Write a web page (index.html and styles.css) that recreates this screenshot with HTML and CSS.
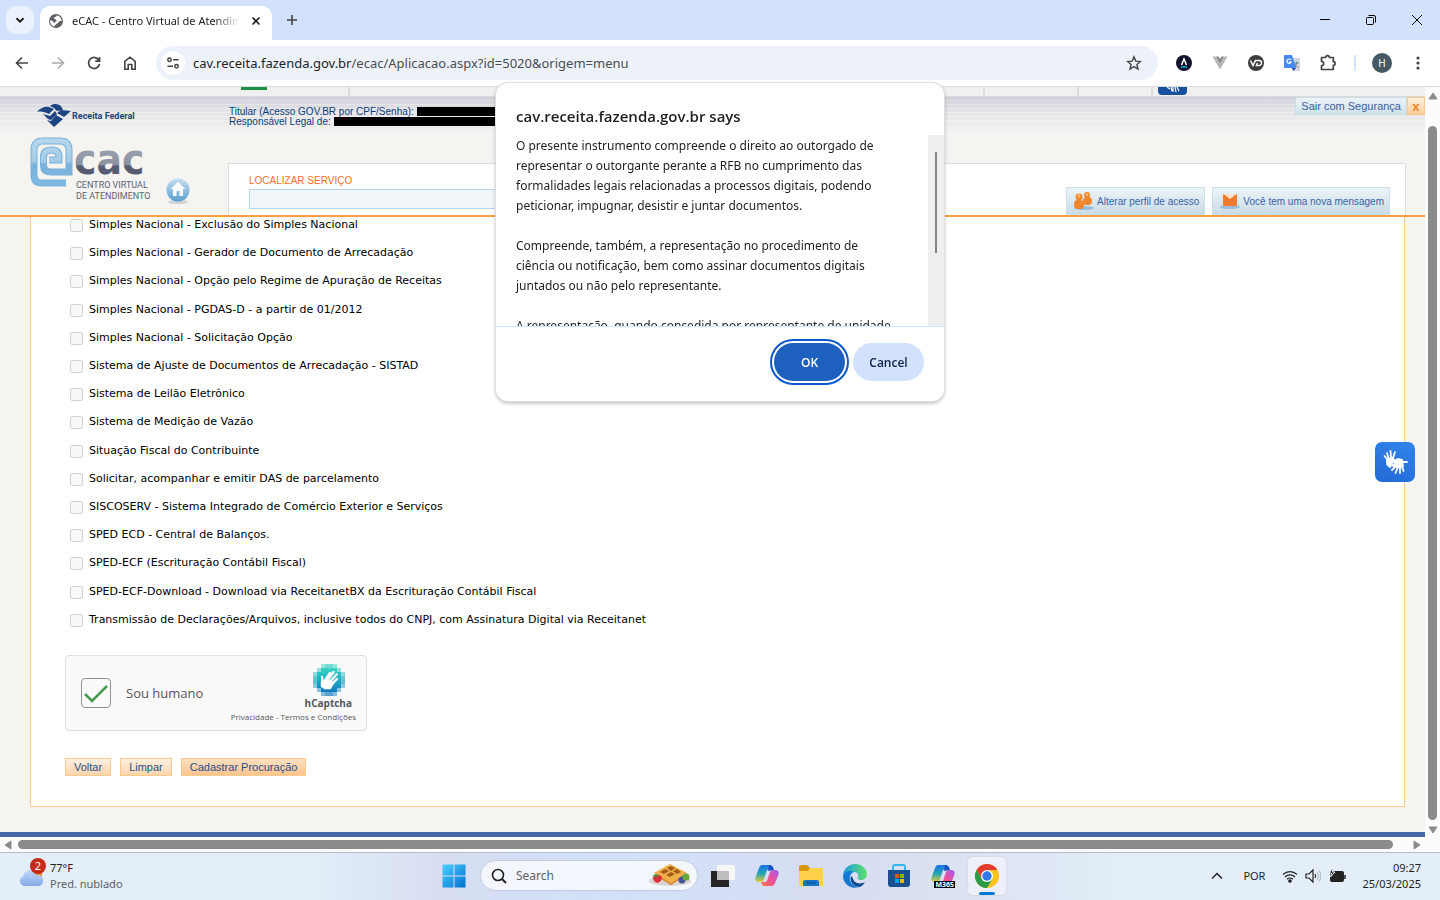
FILE: index.html
```html
<!DOCTYPE html>
<html lang="pt-BR">
<head>
    <meta charset="UTF-8">
    <meta name="viewport" content="width=device-width, initial-scale=1.0">
    <title>eCAC - Centro Virtual de Atendimento</title>
    <link rel="stylesheet" href="styles.css">
</head>
<body>

    <!-- Tab strip -->
    <div class="tabstrip">
        <button class="tab-search" aria-label="Search tabs">
            <svg width="12" height="12" viewBox="0 0 12 12"><path d="M2.5 4.2L6 7.7l3.5-3.5" fill="none" stroke="#1f1f1f" stroke-width="2"/></svg>
        </button>
        <div class="tab">
            <svg width="16" height="16" viewBox="0 0 16 16"><circle cx="8" cy="8" r="7" fill="#5f6368"/><path d="M9 2.5c-1 1.600-3.200 1.200-3 3 .1 1 2.600.6 2.600 2 0 1.200-1.600 1-1.600 2 0 .7-1.600.3-1.900-.7C4.500 7.500 2.800 7.600 2.300 7c-.6 3.300 1.300 5.700 4 6.600L7 12c1-.2 1.200-1.400 2.300-1.600 1.400-.3 1-2 2.200-2.100.9-.1 1.300-.5 2.100-.1.300-2.500-1.500-5-4.600-5.700z" fill="#fff"/></svg>
            <span class="tab-title">eCAC - Centro Virtual de Atendimento</span>
            <button class="tab-close" aria-label="Close tab">
                <svg width="10" height="10" viewBox="0 0 10 10"><path d="M1.500 1.500l7 7M8.500 1.500l-7 7" stroke="#1f1f1f" stroke-width="1.600"/></svg>
            </button>
        </div>
        <button class="new-tab" aria-label="New tab">
            <svg width="12" height="12" viewBox="0 0 12 12"><path d="M6 1v10M1 6h10" stroke="#444" stroke-width="1.600"/></svg>
        </button>
        <div class="window-buttons">
            <button aria-label="Minimize"><svg width="12" height="12" viewBox="0 0 12 12"><path d="M1 5.500h10" stroke="#000"/></svg></button>
            <button aria-label="Restore"><svg width="12" height="12" viewBox="0 0 12 12"><rect x="1.500" y="3.500" width="7" height="7" rx="1" fill="none" stroke="#000"/><path d="M3.500 1.500h5.500a1.500 1.500 0 0 1 1.500 1.500v5.500" fill="none" stroke="#000"/></svg></button>
            <button aria-label="Close"><svg width="12" height="12" viewBox="0 0 12 12"><path d="M1 1l10 10M11 1L1 11" stroke="#000"/></svg></button>
        </div>
    </div>

    <!-- Toolbar -->
    <div class="toolbar">
        <button aria-label="Back"><svg width="16" height="16" viewBox="0 0 16 16"><path d="M14 8H3M8 2.500L2.500 8 8 13.500" fill="none" stroke="#444" stroke-width="1.600"/></svg></button>
        <button aria-label="Forward"><svg width="16" height="16" viewBox="0 0 16 16"><path d="M2 8h11M8 2.500L13.500 8 8 13.500" fill="none" stroke="#aaa" stroke-width="1.600"/></svg></button>
        <button aria-label="Reload"><svg width="16" height="16" viewBox="0 0 16 16"><path d="M13 5.500A5.500 5.500 0 1 0 13.500 9M13.500 2v4.200H9.300" fill="none" stroke="#444" stroke-width="1.700"/></svg></button>
        <button aria-label="Home"><svg width="16" height="16" viewBox="0 0 16 16"><path d="M2.800 14.200V6.300L8 2.200l5.200 4.100v7.900H9.800V9.500H6.200v4.700z" fill="none" stroke="#444" stroke-width="1.600"/></svg></button>
        <div class="address">
            <button class="site-info" aria-label="View site information">
                <svg width="14" height="14" viewBox="0 0 14 14" fill="none" stroke="#444" stroke-width="1.500"><circle cx="3.500" cy="3.800" r="1.700"/><path d="M7 3.800h5.500M1.500 10.200H7"/><circle cx="10.500" cy="10.200" r="1.700"/></svg>
            </button>
            <div class="url">cav.receita.fazenda.gov.br<span>/ecac/Aplicacao.aspx?id=5020&amp;origem=menu</span></div>
            <button aria-label="Bookmark"><svg width="16" height="16" viewBox="0 0 16 16"><path d="M8 1.800l1.800 4.300 4.600.4-3.500 3 1.100 4.500L8 11.600 4 14l1.100-4.500-3.500-3 4.600-.4z" fill="none" stroke="#444" stroke-width="1.400"/></svg></button>
        </div>
        <div class="extensions">
            <button aria-label="Accessibility extension"><svg width="16" height="16" viewBox="0 0 16 16"><circle cx="8" cy="8" r="8" fill="#11152b"/><path d="M5.500 10L8 4l2.500 6" fill="none" stroke="#fff" stroke-width="1.500"/><path d="M5 12h6" stroke="#1aa0d8" stroke-width="1.600"/></svg></button>
            <button aria-label="Vue devtools"><svg width="16" height="16" viewBox="0 0 16 16"><path d="M.5 1.500h3.300L8 9l4.200-7.500h3.300L8 14.500z" fill="#b5b5b5"/><path d="M4 1.500h2.500L8 4l1.500-2.500H12L8 8.800z" fill="#868686"/></svg></button>
            <button aria-label="Video downloader"><svg width="16" height="16" viewBox="0 0 16 16"><circle cx="8" cy="8" r="8" fill="#3d3d3d"/><path d="M2.500 5.500L5 10.500l2.500-5H11a2.500 2.500 0 0 1 0 5H8.500L9.500 8" fill="none" stroke="#fff" stroke-width="1.500"/></svg></button>
            <button aria-label="Translate"><svg width="16" height="16" viewBox="0 0 16 16"><path d="M6 3h9a1 1 0 0 1 1 1v11a1 1 0 0 1-1 1H9z" fill="#d4d6da"/><path d="M10 8h5M12.500 6.500V8c0 2-1.500 4-2.500 4.500M11 9c.5 1.500 2 3 3.500 3.500" fill="none" stroke="#6f8790"/><path d="M1 0h7l4 13H1a1 1 0 0 1-1-1V1a1 1 0 0 1 1-1z" fill="#4687f1"/><path d="M12 13H7.500l2 3z" fill="#2a50c8"/><path d="M7 5A2.200 2.200 0 1 0 7.200 7H5" fill="none" stroke="#fff" stroke-width="1.200"/></svg></button>
            <button aria-label="Extensions"><svg width="18" height="18" viewBox="0 0 18 18"><path d="M2.500 3.500h4.200a1.800 1.800 0 0 1 3.600 0h4v4.200a1.800 1.800 0 0 1 0 3.600v4.200H2.500v-3.800a2.200 2.200 0 0 0 0-4.400z" fill="none" stroke="#444" stroke-width="1.700" stroke-linejoin="round"/></svg></button>
        </div>
        <div class="divider"></div>
        <button class="avatar">H</button>
        <button aria-label="Menu"><svg width="16" height="16" viewBox="0 0 16 16" fill="#444"><circle cx="8" cy="3" r="1.600"/><circle cx="8" cy="8" r="1.600"/><circle cx="8" cy="13" r="1.600"/></svg></button>
    </div>

    <!-- Page viewport with its scrollbars -->
    <div class="viewport">
        <div class="page">
            <div class="gov-bar">
                <div class="gov-brand"><i></i></div>
                <div class="gov-space"></div>
                <div class="gov-link wide"></div>
                <div class="gov-link"></div>
                <div class="gov-vlibras"><svg width="16" height="8" viewBox="0 0 16 8"><path d="M2 0l3 2M6 0l1 4M8 0v5M10 0l1 5M12 0l2 4" stroke="#fff" stroke-width="1.200"/></svg></div>
            </div>

            <header class="header">
                <div class="brand">
                    <div class="receita">
                        <svg width="34" height="23" viewBox="0 0 34 23" fill="#1b4480"><path d="M0 8C3 4 8 2 12 3l5 2-5 5C8 8 4 7 0 8z"/><path d="M13 2c4-3 8-2 11 0l2 4-6 1-3-3z"/><path d="M24 6l10 1-7 6-7-4z"/><path d="M6 10l7 2 5-5 2 3-6 6-3-1z"/><path d="M19 11l7 4-9 8-7-7 4 1z"/></svg>
                        <strong>Receita Federal</strong>
                    </div>
                    <svg class="ecac" width="120" height="68" viewBox="0 0 120 68">
                        <defs>
                            <linearGradient id="blue" x1="0" y1="0" x2="0" y2="1"><stop offset="0" stop-color="#b5d6ec"/><stop offset=".5" stop-color="#a2cbe7"/><stop offset=".55" stop-color="#79b1da"/><stop offset="1" stop-color="#7eb8df"/></linearGradient>
                            <linearGradient id="gray" x1="0" y1="0" x2="0" y2="1"><stop offset=".3" stop-color="#9a9fae"/><stop offset=".6" stop-color="#8d92a2"/><stop offset=".64" stop-color="#555d72"/></linearGradient>
                        </defs>
                        <path d="M36 46H12Q4 46 4 38V13Q4 4 13 4H30Q39 4 39 13V35H21Q13.500 35 13.500 28V20Q13.500 13 21.500 13Q29 13 29 20V23H19" fill="none" stroke="#79b1da" stroke-width="7"/>
                        <path d="M36 46H12Q4 46 4 38V13Q4 4 13 4H30Q39 4 39 13V35H21Q13.500 35 13.500 28V20Q13.500 13 21.500 13Q29 13 29 20V23H19" fill="none" stroke="url(#blue)" stroke-width="5"/>
                        <text x="44" y="37" class="cac">cac</text>
                        <text x="46" y="51" class="cac-sub">CENTRO VIRTUAL</text>
                        <text x="46" y="62" class="cac-sub">DE ATENDIMENTO</text>
                    </svg>
                    <a class="home" href="#" aria-label="Início">
                        <svg width="26" height="28" viewBox="0 0 26 28"><defs><linearGradient id="orb" x1="0" y1="0" x2="0" y2="1"><stop offset="0" stop-color="#c4dff0"/><stop offset="1" stop-color="#5d9fce"/></linearGradient></defs><ellipse cx="13" cy="25" rx="10" ry="2" fill="#d0d4d6"/><circle cx="13" cy="13" r="11.500" fill="url(#orb)"/><path d="M13 5l7.500 7H18v7h-3.500v-5h-3v5H8v-7H5.500z" fill="#fff"/></svg>
                    </a>
                </div>
                <div class="header-main">
                    <div class="header-top">
                        <div class="holder">
                            <div>Titular (Acesso GOV.BR por CPF/Senha): <b></b></div>
                            <div>Responsável Legal de: <b></b></div>
                        </div>
                        <div class="logout">
                            <a href="#">Sair com Segurança</a>
                            <button aria-label="Sair">x</button>
                        </div>
                    </div>
                    <div class="service-box">
                        <div class="search-service">
                            <label for="servico">LOCALIZAR SERVIÇO</label>
                            <input type="text" id="servico">
                        </div>
                        <a class="header-btn" href="#">
                            <svg width="22" height="20" viewBox="0 0 22 20"><ellipse cx="11" cy="17" rx="10" ry="2" fill="#9cbdda"/><g fill="#f08529"><circle cx="14" cy="4" r="3"/><rect x="10" y="6" width="9" height="8" rx="4"/><circle cx="6" cy="6" r="3.500"/><rect x="1" y="9" width="10" height="9" rx="4"/></g><circle cx="6" cy="5" r="1.800" fill="#fbb878"/><circle cx="14" cy="3.500" r="1.500" fill="#fbb878"/></svg>
                            <span>Alterar perfil de acesso</span>
                        </a>
                        <a class="header-btn" href="#">
                            <svg width="22" height="20" viewBox="0 0 22 20"><ellipse cx="11" cy="16" rx="10" ry="2" fill="#9cbdda"/><rect x="4" y="3" width="14" height="12" rx="1" fill="#f07b2c"/><path d="M4.500 3h13L11 8z" fill="#fde2cd"/></svg>
                            <span>Você tem uma nova mensagem</span>
                        </a>
                    </div>
                </div>
            </header>

            <main class="content">
                <form class="panel">
                    <ul class="services">
                        <li><label><input type="checkbox" disabled>Simples Nacional - Exclusão do Simples Nacional</label></li>
                        <li><label><input type="checkbox" disabled>Simples Nacional - Gerador de Documento de Arrecadação</label></li>
                        <li><label><input type="checkbox" disabled>Simples Nacional - Opção pelo Regime de Apuração de Receitas</label></li>
                        <li><label><input type="checkbox" disabled>Simples Nacional - PGDAS-D - a partir de 01/2012</label></li>
                        <li><label><input type="checkbox" disabled>Simples Nacional - Solicitação Opção</label></li>
                        <li><label><input type="checkbox" disabled>Sistema de Ajuste de Documentos de Arrecadação - SISTAD</label></li>
                        <li><label><input type="checkbox" disabled>Sistema de Leilão Eletrônico</label></li>
                        <li><label><input type="checkbox" disabled>Sistema de Medição de Vazão</label></li>
                        <li><label><input type="checkbox" disabled>Situação Fiscal do Contribuinte</label></li>
                        <li><label><input type="checkbox" disabled>Solicitar, acompanhar e emitir DAS de parcelamento</label></li>
                        <li><label><input type="checkbox" disabled>SISCOSERV - Sistema Integrado de Comércio Exterior e Serviços</label></li>
                        <li><label><input type="checkbox" disabled>SPED ECD - Central de Balanços.</label></li>
                        <li><label><input type="checkbox" disabled>SPED-ECF (Escrituração Contábil Fiscal)</label></li>
                        <li><label><input type="checkbox" disabled>SPED-ECF-Download - Download via ReceitanetBX da Escrituração Contábil Fiscal</label></li>
                        <li><label><input type="checkbox" disabled>Transmissão de Declarações/Arquivos, inclusive todos do CNPJ, com Assinatura Digital via Receitanet</label></li>
                    </ul>

                    <div class="captcha">
                        <label class="captcha-check">
                            <span class="captcha-box">
                                <input type="checkbox" checked>
                                <svg width="26" height="22" viewBox="0 0 26 22"><path d="M2 12l7 7L24 4" fill="none" stroke="#4a9c54" stroke-width="2.600"/></svg>
                            </span>
                            Sou humano
                        </label>
                        <div class="captcha-brand">
                            <svg width="32" height="32" viewBox="0 0 32 32" shape-rendering="crispEdges">
                                <defs><linearGradient id="teal" x1="0" y1="0" x2="0" y2="1"><stop offset="0" stop-color="#3bd4c1"/><stop offset=".45" stop-color="#1fb2c5"/><stop offset="1" stop-color="#1479bf"/></linearGradient></defs>
                                <path d="M8 0h16v4h4v4h4v16h-4v4h-4v4H8v-4H4v-4H0V8h4V4h4z" fill="url(#teal)" opacity=".5"/>
                                <path d="M12 0h8v4h4v4h4v4h4v8h-4v4h-4v4h-4v4h-8v-4H8v-4H4v-4H0v-8h4V8h4V4h4z" fill="url(#teal)" opacity=".4"/>
                                <path d="M8 4h16v4h4v16h-4v4H8v-4H4V8h4z" fill="url(#teal)"/>
                                <g shape-rendering="auto" stroke="#fff" stroke-width="2.400" stroke-linecap="round"><path d="M11 18l6-9M14 17l6.500-9M17 18l6.500-7.500M19 20l5-5M9.500 19l-.5-6"/><path d="M9 18l5-3 6 4-3 5h-5l-3-2z" fill="#fff"/></g>
                            </svg>
                            <strong>hCaptcha</strong>
                            <div class="captcha-links"><a href="#">Privacidade</a> - <a href="#">Termos e Condições</a></div>
                        </div>
                    </div>

                    <div class="actions">
                        <button type="button">Voltar</button>
                        <button type="reset">Limpar</button>
                        <button type="submit" class="primary">Cadastrar Procuração</button>
                    </div>
                </form>
            </main>
            <footer class="footer"></footer>

            <button class="vlibras" aria-label="Acessível em Libras">
                <svg width="26" height="26" viewBox="0 0 26 26" stroke="#fff" stroke-width="1.800" stroke-linecap="round"><path d="M5 10L2.500 7M6.500 9L5 4M9 8.500L8.500 2M11 9l2-6M5 15l3 3"/><path d="M5 10l6-1.500 1 2.500-4 2 3 3-3 .5-3-3z" fill="#fff"/><path d="M13 18l-3 3M15.500 19l-2 5M18 19v5M20 17l1.500 5M21 13h4"/><path d="M10 13l6-3 4 1 1 6-3 2-5-1.500-3-1 4-2z" fill="#fff"/></svg>
            </button>
        </div>

        <div class="scroll-y">
            <svg width="10" height="8" viewBox="0 0 10 8"><path d="M5 1l4 6H1z" fill="#8b8b8b" stroke="#8b8b8b" stroke-linejoin="round"/></svg>
            <div class="track"><div class="thumb"></div></div>
            <svg width="10" height="8" viewBox="0 0 10 8"><path d="M5 7L1 1h8z" fill="#8b8b8b" stroke="#8b8b8b" stroke-linejoin="round"/></svg>
        </div>
        <div class="scroll-x">
            <svg width="8" height="10" viewBox="0 0 8 10"><path d="M1 5l6-4v8z" fill="#8b8b8b" stroke="#8b8b8b" stroke-linejoin="round"/></svg>
            <div class="track"><div class="thumb"></div></div>
            <svg width="8" height="10" viewBox="0 0 8 10"><path d="M7 5L1 1v8z" fill="#8b8b8b" stroke="#8b8b8b" stroke-linejoin="round"/></svg>
        </div>
    </div>

    <!-- Confirm dialog -->
    <div class="dialog" role="dialog" aria-labelledby="dialog-title">
        <h1 id="dialog-title">cav.receita.fazenda.gov.br says</h1>
        <div class="dialog-body">
            <div class="dialog-text">
                <p>O presente instrumento compreende o direito ao outorgado de<br>representar o outorgante perante a RFB no cumprimento das<br>formalidades legais relacionadas a processos digitais, podendo<br>peticionar, impugnar, desistir e juntar documentos.</p>
                <p>Compreende, também, a representação no procedimento de<br>ciência ou notificação, bem como assinar documentos digitais<br>juntados ou não pelo representante.</p>
                <p>A representação, quando concedida por representante de unidade</p>
            </div>
            <div class="dialog-scroll"><div></div></div>
        </div>
        <div class="dialog-actions">
            <button class="ok">OK</button>
            <button>Cancel</button>
        </div>
    </div>

    <!-- Taskbar -->
    <div class="taskbar">
        <button class="weather">
            <span class="weather-icon">
                <svg width="26" height="18" viewBox="0 0 26 18"><defs><linearGradient id="cloud" x1="0" y1="0" x2="0" y2="1"><stop offset="0" stop-color="#c2d9fb"/><stop offset="1" stop-color="#86aae8"/></linearGradient></defs><circle cx="19" cy="5" r="4" fill="#f08a1c"/><path d="M5 17a5 5 0 0 1-1-9.500C5 3 8 1 11 1s5 2 6 5c4-1 7 1.500 7 5.500s-2 5.500-5 5.500z" fill="url(#cloud)"/></svg>
                <span class="badge">2</span>
            </span>
            <span class="weather-text">77°F<small>Pred. nublado</small></span>
        </button>

        <div class="apps">
            <button class="start" aria-label="Start">
                <svg width="24" height="24" viewBox="0 0 24 24"><defs><linearGradient id="win" x1="0" y1="0" x2="1" y2="1"><stop offset="0" stop-color="#4fd0ff"/><stop offset="1" stop-color="#0070d0"/></linearGradient></defs><path d="M.5.5h11v11H.5zM12.500.5h11v11h-11zM.5 12.500h11v11H.5zM12.500 12.500h11v11h-11z" fill="url(#win)"/></svg>
            </button>
            <div class="search">
                <svg width="16" height="16" viewBox="0 0 16 16"><circle cx="7" cy="7" r="5.500" fill="none" stroke="#222" stroke-width="1.600"/><path d="M11 11l4 4" stroke="#222" stroke-width="2"/></svg>
                <input type="text" placeholder="Search" aria-label="Search">
                <svg width="42" height="24" viewBox="0 0 42 24"><ellipse cx="21" cy="17" rx="21" ry="5" fill="#d9d3d3"/><path d="M5 11L21 1l17 10-16 10z" fill="#d98a2b"/><path d="M5 9L21 0l17 9-16 10z" fill="#f0b04c"/><path d="M11 8l5-3 4 2-5 3zM18 4l4-2 4 2-4 3zM17 11l5-3 4 2-5 3zM24 7l4-2 4 3-4 2z" fill="#a35d18"/><path d="M4 13q5-5 9 0 0 5-5 6-4-2-4-6z" fill="#dc2f3d"/><path d="M3 12l4-2 3 2-3 1z" fill="#4d9b34"/><circle cx="33" cy="16" r="3.500" fill="#47549c"/><circle cx="37" cy="13" r="3.500" fill="#67a83b"/></svg>
            </div>
            <button aria-label="Task view"><svg width="24" height="24" viewBox="0 0 24 24"><path d="M0 7h18v16H0z" fill="#242424"/><path d="M6 1h18v15H6z" fill="#f6f6f6"/><path d="M6 7h12v9H6z" fill="#bdbdbd"/></svg></button>
            <button aria-label="Copilot">
                <svg width="24" height="24" viewBox="0 0 24 24"><defs><linearGradient id="copa" x1="0" y1="0" x2="0" y2="1"><stop offset="0" stop-color="#1b72e6"/><stop offset=".5" stop-color="#1ea6b8"/><stop offset="1" stop-color="#e8c82d"/></linearGradient><linearGradient id="copb" x1="1" y1="0" x2="0" y2="1"><stop offset="0" stop-color="#9d5cf0"/><stop offset=".5" stop-color="#ef4f9c"/><stop offset="1" stop-color="#f77a3c"/></linearGradient></defs><path d="M7 1h8q2 0 3 4h-4q-2 0-3 4l-2 6q-1 3-4 3H3q-4-1-2-6l3-8q1-3 3-3z" fill="url(#copa)"/><path d="M14 1q4 0 5 5l-6 1z" fill="#1850c4"/><path d="M17 22H9q-2 0-3-4h4q2 0 3-4l2-6q1-2 4-2h2q4 1 2 6l-3 7q-1 3-3 3z" fill="url(#copb)"/></svg>
            </button>
            <button aria-label="File Explorer"><svg width="24" height="24" viewBox="0 0 24 24"><path d="M0 3q0-2 2-2h6l3 3-2 4H0z" fill="#d9970c"/><path d="M0 7h9l2-3h13v18H0z" fill="#ffd14a"/><path d="M4 22v-4q0-2 2-2h12q2 0 2 2v4z" fill="#1577c7"/><path d="M7 19h10" stroke="#074d91"/></svg></button>
            <button aria-label="Edge">
                <svg width="24" height="24" viewBox="0 0 24 24"><defs><linearGradient id="edge" x1="0" y1="0" x2="1" y2="0"><stop offset="0" stop-color="#1a9be0"/><stop offset="1" stop-color="#5fe06a"/></linearGradient></defs><path d="M0 11C1 4 6 0 12 0c7 0 12 5 12 10 0 4-3 6-6 6-2 0-4-1-3-3 1-3-1-5-4-5-4 0-8 1-11 3z" fill="url(#edge)"/><path d="M0 12c2-5 7-6 11-4-3 1-5 4-4 8 1 4 5 7 9 7C8 26 0 20 0 12z" fill="#1479cf"/><path d="M8 12c-2 6 3 11 9 11 2-1 4-3 5-5-5 3-12 1-12-4z" fill="#0c4a8f"/></svg>
            </button>
            <button aria-label="Microsoft Store"><svg width="24" height="24" viewBox="0 0 24 24"><path d="M6 6V3q0-2 2-2h8q2 0 2 2v3" fill="none" stroke="#35b6ee" stroke-width="2"/><path d="M1 6h22v14q0 3-3 3H4q-3 0-3-3z" fill="#19508d"/><path d="M8 10h4v4H8z" fill="#f25022"/><path d="M13 10h4v4h-4z" fill="#7fba00"/><path d="M8 15h4v4H8z" fill="#00a4ef"/><path d="M13 15h4v4h-4z" fill="#ffb900"/></svg></button>
            <button aria-label="Microsoft 365">
                <span class="m365">
                    <svg width="24" height="24" viewBox="0 0 24 24"><path d="M7 1h8q2 0 3 4h-4q-2 0-3 4l-2 6q-1 3-4 3H3q-4-1-2-6l3-8q1-3 3-3z" fill="url(#copa)"/><path d="M14 1q4 0 5 5l-6 1z" fill="#1850c4"/><path d="M17 22H9q-2 0-3-4h4q2 0 3-4l2-6q1-2 4-2h2q4 1 2 6l-3 7q-1 3-3 3z" fill="url(#copb)"/></svg>
                    <b>M365</b>
                </span>
            </button>
            <button class="active" aria-label="Chrome"><svg width="24" height="24" viewBox="0 0 24 24"><circle cx="12" cy="12" r="12" fill="#fcc31e"/><path d="M1.600 6A12 12 0 0 1 22.400 6H12L6.800 15z" fill="#e33b2e"/><path d="M1.600 6A12 12 0 0 0 12 24l5.200-9-10.400 0z" fill="#2a9a48"/><circle cx="12" cy="12" r="6" fill="#fff"/><circle cx="12" cy="12" r="4.700" fill="#3377e8"/></svg></button>
        </div>

        <div class="tray">
            <button aria-label="Show hidden icons"><svg width="12" height="12" viewBox="0 0 12 12"><path d="M1 8.500l5-5 5 5" fill="none" stroke="#222" stroke-width="1.500"/></svg></button>
            <button class="lang">POR</button>
            <button class="status" aria-label="Network, volume and battery">
                <svg width="16" height="16" viewBox="0 0 16 16" fill="none" stroke="#222" stroke-width="1.200"><path d="M1 6.500a10 10 0 0 1 14 0M3 9a7 7 0 0 1 10 0M5 11.300a4.300 4.300 0 0 1 6 0"/><circle cx="8" cy="13" r="1.200" fill="#222"/></svg>
                <svg width="16" height="16" viewBox="0 0 16 16" fill="none" stroke="#222" stroke-width="1.200"><path d="M1 6h3l4-4v12l-4-4H1z"/><path d="M10 6q1.500 2 0 4"/><path d="M12 4q3 4 0 8M14 2.500q4 5.500 0 11" stroke="#b5bcc5"/></svg>
                <svg width="18" height="16" viewBox="0 0 18 16"><rect x="2" y="3" width="14" height="11" rx="2" fill="#222"/><path d="M17 7v4" stroke="#222" stroke-width="1.500"/><path d="M5 0L1 5h2.500L2.500 9 7 4H4.500z" fill="#222" stroke="#e4eef8"/></svg>
            </button>
            <button class="clock"><span>09:27</span><span>25/03/2025</span></button>
        </div>
    </div>

</body>
</html>
```
FILE: styles.css
```css
* {
    box-sizing: border-box;
}
body {
    margin: 0;
    height: 100vh;
    display: flex;
    flex-direction: column;
    overflow: hidden;
    font-family: "Noto Sans", "Open Sans", sans-serif;
    font-size: 12px;
    color: #1f1f1f;
}
svg {
    display: block;
    flex: none;
}
button {
    font-family: inherit;
    color: inherit;
    border: 0;
    padding: 0;
    background: none;
    display: flex;
    align-items: center;
    justify-content: center;
    cursor: pointer;
}
a {
    color: inherit;
    text-decoration: none;
}

/* Tab strip */
.tabstrip {
    height: 40px;
    flex: none;
    display: flex;
    align-items: center;
    padding: 0 0 0 6px;
    background: #d3e2fc;
}
.tab-search {
    width: 28px;
    height: 28px;
    border-radius: 10px;
    background: #ebf2fe;
}
.tab {
    align-self: flex-end;
    width: 232px;
    height: 34px;
    margin-left: 6px;
    padding: 0 8px 5px;
    display: flex;
    align-items: center;
    gap: 8px;
    background: #fff;
    border-radius: 10px 10px 0 0;
}
.tab-title {
    flex: 1;
    overflow: hidden;
    white-space: nowrap;
    font-size: 11px;
    -webkit-mask-image: linear-gradient(90deg, #000 85%, transparent);
    mask-image: linear-gradient(90deg, #000 85%, transparent);
}
.tab-close {
    width: 16px;
    height: 16px;
}
.new-tab {
    width: 28px;
    height: 28px;
    margin-left: 6px;
}
.window-buttons {
    margin-left: auto;
    display: flex;
}
.window-buttons button {
    width: 46px;
    height: 40px;
}

/* Toolbar */
.toolbar {
    height: 47px;
    flex: none;
    display: flex;
    align-items: center;
    gap: 8px;
    padding: 0 8px;
    background: #fff;
    border-bottom: 1px solid #dcdcdc;
}
.toolbar button {
    width: 28px;
    height: 28px;
    flex: none;
}
.address {
    flex: 1;
    height: 34px;
    margin-left: 4px;
    padding: 0 10px 0 5px;
    display: flex;
    align-items: center;
    gap: 8px;
    border-radius: 17px;
    background: #edf2fa;
}
.toolbar .site-info {
    width: 24px;
    height: 24px;
    border-radius: 12px;
    background: #fff;
}
.url {
    flex: 1;
    font-size: 13px;
    white-space: nowrap;
}
.url span {
    color: #4a4d51;
}
.extensions {
    display: flex;
    gap: 8px;
    margin-left: 4px;
}
.divider {
    width: 2px;
    height: 16px;
    margin: 0 4px;
    background: #d3e2fc;
}
.toolbar .avatar {
    width: 20px;
    height: 20px;
    margin: 0 4px;
    border-radius: 10px;
    background: #455a64;
    color: #fff;
    font-size: 10px;
}

/* Viewport and scrollbars */
.viewport {
    flex: 1;
    min-height: 0;
    display: grid;
    grid-template-columns: 1fr 15px;
    grid-template-rows: 1fr 15px;
    background: #fcfcfc;
}
.page {
    min-width: 0;
    min-height: 0;
    display: flex;
    flex-direction: column;
    background: #f5f4f0;
    overflow: hidden;
}
.scroll-y,
.scroll-x {
    display: flex;
    align-items: center;
    gap: 6px;
}
.scroll-y {
    flex-direction: column;
    padding: 5px 0 3px;
}
.scroll-x {
    padding: 0 4px;
}
.track {
    flex: 1;
    display: flex;
}
.thumb {
    flex: 1;
    border-radius: 5px;
    background: #8b8b8b;
}
.scroll-y .thumb {
    width: 9px;
    margin-top: 20px;
}
.scroll-x .thumb {
    height: 9px;
    margin-right: 14px;
}

/* Government bar */
.gov-bar {
    height: 10px;
    flex: none;
    display: flex;
    padding-right: 238px;
    background: #f0f0f0;
    border-bottom: 1px solid #dadada;
}
.gov-brand {
    width: 350px;
    padding-left: 241px;
    border-right: 2px solid #dcdcdc;
}
.gov-brand i {
    display: block;
    width: 26px;
    height: 3px;
    background: #1e8e45;
}
.gov-space {
    flex: 1;
}
.gov-link {
    width: 74px;
    border-right: 2px solid #dcdcdc;
}
.gov-link.wide {
    width: 96px;
    border-left: 2px solid #dcdcdc;
}
.gov-vlibras {
    width: 29px;
    height: 8px;
    margin-left: 5px;
    display: flex;
    justify-content: center;
    border-radius: 0 0 4px 4px;
    background: #184f9f;
}

/* Header */
.header {
    height: 120px;
    flex: none;
    display: flex;
    font-family: "Liberation Sans", Arial, sans-serif;
    border-bottom: 2px solid #fb9d42;
    background:
        repeating-linear-gradient(rgba(255, 255, 255, 0) 0 3px, rgba(255, 255, 255, 0.35) 3px 4px) 0 0 / 100% 24px no-repeat,
        linear-gradient(#cfd0da, #e4e4e8 15px, #f5f4f0 36px);
}
.brand {
    width: 228px;
    flex: none;
    padding: 7px 0 0 30px;
    display: grid;
    grid-template-columns: 120px 1fr;
    grid-template-rows: 23px 1fr;
    row-gap: 10px;
}
.receita {
    grid-column: 1 / 3;
    display: flex;
    align-items: center;
    gap: 1px;
    padding-left: 7px;
    color: #1b4480;
}
.receita strong {
    font-family: Roboto, "Open Sans", sans-serif;
    font-size: 9px;
}
.cac {
    font-family: "DejaVu Sans Condensed", "DejaVu Sans", sans-serif;
    font-size: 42px;
    font-weight: bold;
    fill: url(#gray);
}
.cac-sub {
    font-family: Roboto, sans-serif;
    font-size: 9px;
    fill: #5d6375;
}
.home {
    padding: 40px 0 0 15px;
}
.header-main {
    flex: 1;
    min-width: 0;
    display: flex;
    flex-direction: column;
}
.header-top {
    height: 66px;
    display: flex;
    justify-content: space-between;
    align-items: flex-start;
    color: #0a3f78;
}
.holder {
    padding: 10px 0 0 1px;
    font-size: 10px;
    line-height: 10px;
}
.holder div {
    display: flex;
    gap: 3px;
    width: 420px;
}
.holder b {
    flex: 1;
    background: #000;
    border-bottom: 1px solid #eee;
}
.logout {
    display: flex;
    height: 18px;
    font-size: 11px;
    color: #3a62a5;
}
.logout a {
    padding: 2px 5px 0;
    border: 1px solid #cadfe9;
    background: linear-gradient(#edf4f7, #cfe1ea);
}
.logout button {
    width: 18px;
    border: 1px solid #fcc98c;
    background: linear-gradient(#fff0df, #fdcf9c);
    color: #f08529;
    font-weight: bold;
}
.service-box {
    flex: 1;
    display: flex;
    align-items: flex-end;
    gap: 7px;
    margin-right: 19px;
    padding: 0 15px 0 20px;
    border: 1px solid #dcdcdc;
    border-bottom: 0;
    border-radius: 2px 2px 0 0;
    background: #fff;
}
.search-service {
    flex: 1;
    display: flex;
    flex-direction: column;
    align-items: flex-start;
    gap: 3px;
    padding-bottom: 6px;
    font-size: 10px;
    color: #f36f2a;
}
.search-service input {
    width: 400px;
    height: 20px;
    margin: 0;
    border: 1px solid #b9d5e6;
    background: #f0f6fa;
}
.header-btn {
    height: 28px;
    display: flex;
    align-items: center;
    gap: 2px;
    padding: 0 5px 0 6px;
    border: 1px solid #cadfe9;
    background: linear-gradient(#edf4f7, #c8dce7);
    color: #3a62a5;
    font-size: 10px;
}

/* Content */
.content {
    flex: 1;
    min-height: 0;
    display: flex;
    padding: 0 20px 25px 30px;
}
.panel {
    flex: 1;
    display: flex;
    flex-direction: column;
    align-items: flex-start;
    padding: 0 34px 30px;
    border: 1px solid #fcc98c;
    border-top: 0;
    background: #fff;
}
.services {
    flex: 1;
    display: flex;
    flex-direction: column;
    justify-content: space-between;
    margin: 0;
    padding: 0 0 0 5px;
    list-style: none;
    font-family: "DejaVu Sans", Verdana, sans-serif;
    font-size: 11px;
    line-height: 15px;
    color: #000;
}
.services label {
    display: flex;
    align-items: flex-end;
    gap: 6px;
}
.services input {
    width: 13px;
    height: 13px;
    margin: 0;
}
.captcha {
    width: 302px;
    height: 76px;
    margin: 28px 0 27px;
    padding: 0 10px 0 15px;
    display: flex;
    align-items: center;
    border: 1px solid #e0e0e0;
    border-radius: 4px;
    background: #fafafa;
    color: #555;
    font-family: "Open Sans", "Noto Sans", sans-serif;
}
.captcha-check {
    display: flex;
    align-items: center;
    gap: 15px;
    font-size: 13px;
    white-space: nowrap;
}
.captcha-box {
    display: grid;
    place-items: center;
}
.captcha-box > * {
    grid-area: 1 / 1;
}
.captcha-box input {
    appearance: none;
    width: 30px;
    height: 30px;
    margin: 0;
    border: 1px solid #919191;
    border-radius: 4px;
    background: #fafafa;
}
.captcha-brand {
    flex: 1;
    display: flex;
    flex-direction: column;
    align-items: flex-end;
    font-size: 10px;
    line-height: 15px;
}
.captcha-brand svg {
    margin-right: 11px;
}
.captcha-brand strong {
    margin-right: 4px;
}
.captcha-links {
    font-size: 8px;
    line-height: 12px;
    white-space: nowrap;
}
.actions {
    display: flex;
    gap: 9px;
}
.actions button {
    height: 18px;
    padding: 0 8px;
    border: 1px solid #fcc98c;
    background: linear-gradient(#fff0e0, #fdd5ab);
    color: #24508f;
    font-family: "Liberation Sans", Arial, sans-serif;
    font-size: 11px;
}
.actions .primary {
    background: linear-gradient(#fde0c2, #fbc48e);
}
.footer {
    height: 5px;
    flex: none;
    background: #4469a6;
}
.vlibras {
    position: fixed;
    right: 25px;
    top: 442px;
    width: 40px;
    height: 40px;
    border-radius: 7px;
    background: linear-gradient(20deg, #2369d6, #3185ea);
}

/* Dialog */
.dialog {
    position: fixed;
    top: 83px;
    left: 50%;
    width: 448px;
    margin-left: -224px;
    border-radius: 12px;
    background: #fff;
    box-shadow: 0 0 0 1px #dfdfdf, 0 2px 4px rgba(0, 0, 0, 0.3);
}
.dialog h1 {
    margin: 0;
    padding: 22px 20px 8px;
    font-family: "Open Sans", "Noto Sans", sans-serif;
    font-size: 15px;
    line-height: 22px;
    font-weight: 600;
}
.dialog-body {
    height: 192px;
    display: flex;
    overflow: hidden;
    border-bottom: 1px solid #d3e2fc;
}
.dialog-text {
    flex: 1;
    padding: 1px 0 0 20px;
    font-size: 12px;
    line-height: 20px;
    white-space: nowrap;
}
.dialog-text p {
    margin: 0 0 20px;
}
.dialog-scroll {
    width: 16px;
    padding: 17px 7px;
    background: #efefef;
}
.dialog-scroll div {
    width: 2px;
    height: 101px;
    background: #858585;
}
.dialog-actions {
    display: flex;
    justify-content: flex-end;
    gap: 8px;
    padding: 16px 20px 20px;
}
.dialog-actions button {
    width: 71px;
    height: 38px;
    border-radius: 19px;
    background: #d3e2fc;
    color: #0a2149;
    font-family: "Open Sans", "Noto Sans", sans-serif;
    font-size: 12px;
    font-weight: 600;
}
.dialog-actions .ok {
    background: #1e60bd;
    color: #fff;
    outline: 2px solid #0b57d0;
    outline-offset: 2px;
}

/* Taskbar */
.taskbar {
    height: 48px;
    flex: none;
    display: grid;
    grid-template-columns: 1fr auto 1fr;
    padding: 0 19px 2px;
    border-top: 1px solid #b3bcc9;
    background: linear-gradient(90deg, #e3eef8 22%, #d6ddf2 31%, #d2e1f8 42%, #d7ddf2 58%, #dbe3f0 68%, #e3eef8 78%);
}
.weather {
    justify-self: start;
    gap: 5px;
    text-align: left;
}
.weather-icon {
    position: relative;
    padding-top: 4px;
}
.badge {
    position: absolute;
    top: -7px;
    right: -1px;
    width: 16px;
    height: 16px;
    border-radius: 8px;
    background: #c42b1c;
    color: #fff;
    font-size: 11px;
    line-height: 16px;
    text-align: center;
}
.weather-text {
    font-size: 11px;
    line-height: 16px;
}
.weather-text small {
    display: block;
    font-size: 11px;
    color: #5b6068;
}
.apps {
    display: flex;
    align-items: center;
    gap: 6px;
}
.apps button {
    width: 38px;
    height: 38px;
    border-radius: 4px;
}
.apps .start {
    width: 40px;
}
.apps .active {
    position: relative;
    background: #edf0f8;
    box-shadow: 0 0 1px #a5acb8;
}
.apps .active::after {
    content: "";
    position: absolute;
    bottom: 0;
    width: 16px;
    height: 3px;
    border-radius: 2px;
    background: #0078d4;
}
.search {
    width: 218px;
    height: 31px;
    display: flex;
    align-items: center;
    gap: 9px;
    padding: 0 6px 0 10px;
    border-radius: 16px;
    border: 1px solid #c5cee0;
    background: #f3f6fd;
}
.search input {
    flex: 1;
    min-width: 0;
    padding: 0;
    border: 0;
    background: none;
    font-family: inherit;
    font-size: 12px;
}
.search input::placeholder {
    color: #616161;
}
.m365 {
    position: relative;
}
.m365 b {
    position: absolute;
    right: 0;
    bottom: 0;
    padding: 0 1px;
    background: #000;
    color: #fff;
    font-size: 7px;
    line-height: 7px;
}
.tray {
    justify-self: end;
    display: flex;
    align-items: center;
}
.tray button {
    font-size: 11px;
}
.tray .lang {
    margin: 0 17px 0 20px;
}
.tray .status {
    gap: 7px;
}
.tray .clock {
    margin-left: 16px;
    flex-direction: column;
    align-items: flex-end;
    line-height: 16px;
}
```
